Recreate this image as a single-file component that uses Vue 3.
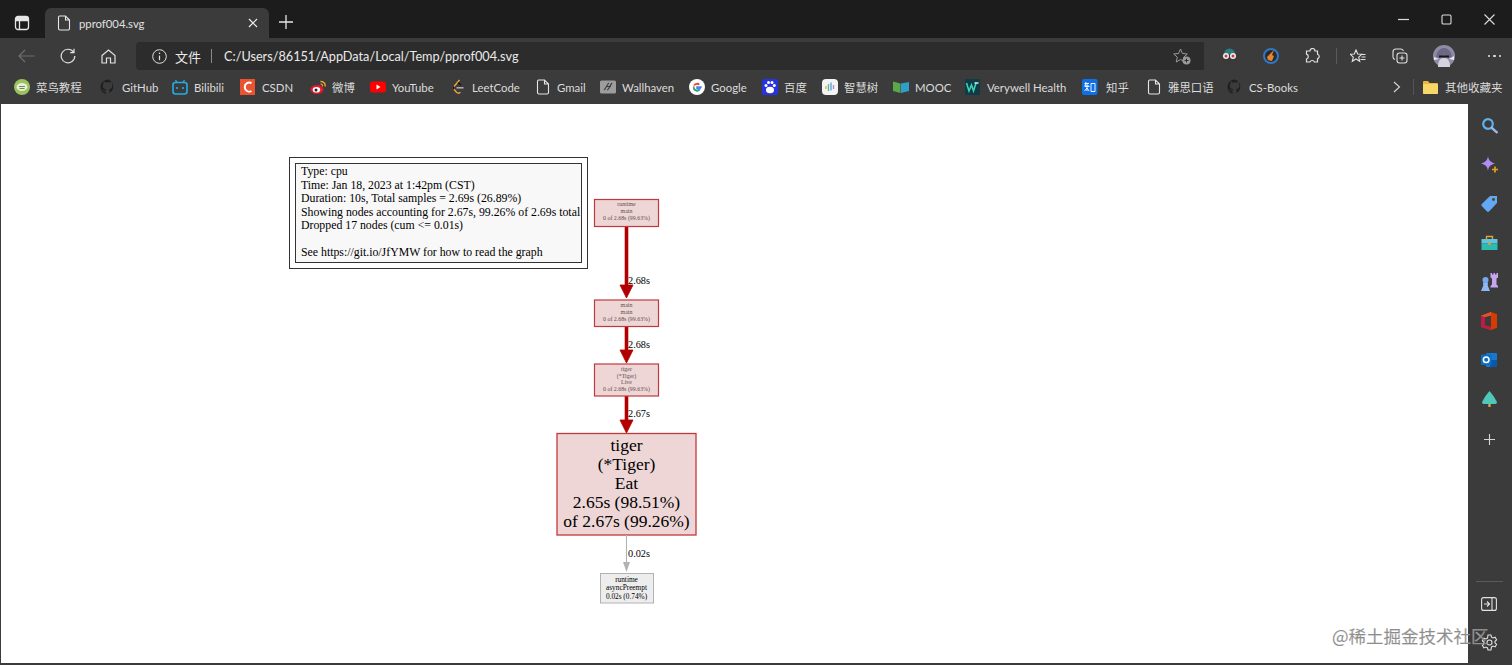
<script setup>
const bookmarks = [
  { id: 'runoob', label: '菜鸟教程', w: 86 },
  { id: 'github', label: 'GitHub', w: 72 },
  { id: 'bili', label: 'Bilibili', w: 68 },
  { id: 'csdn', label: 'CSDN', w: 70 },
  { id: 'weibo', label: '微博', w: 60 },
  { id: 'yt', label: 'YouTube', w: 80 },
  { id: 'leet', label: 'LeetCode', w: 85 },
  { id: 'doc', label: 'Gmail', w: 65 },
  { id: 'wall', label: 'Wallhaven', w: 89 },
  { id: 'google', label: 'Google', w: 73 },
  { id: 'baidu', label: '百度', w: 60 },
  { id: 'zhs', label: '智慧树', w: 71 },
  { id: 'mooc', label: 'MOOC', w: 72 },
  { id: 'very', label: 'Verywell Health', w: 117 },
  { id: 'zhihu', label: '知乎', w: 64 },
  { id: 'doc', label: '雅思口语', w: 81 },
  { id: 'github', label: 'CS-Books', w: 100 }
]
const legend = [
  ['Type: cpu', 175],
  ['Time: Jan 18, 2023 at 1:42pm (CST)', 189],
  ['Duration: 10s, Total samples = 2.69s (26.89%)', 202],
  ['Showing nodes accounting for 2.67s, 99.26% of 2.69s total', 216],
  ['Dropped 17 nodes (cum <= 0.01s)', 229],
  ['See https://git.io/JfYMW for how to read the graph', 256]
]
const smallNodes = [
  { y: 199.5, h: 27, lines: [['runtime', 206], ['main', 213], ['0 of 2.68s (99.63%)', 220]] },
  { y: 300, h: 26.5, lines: [['main', 307], ['main', 314], ['0 of 2.68s (99.63%)', 321]] },
  { y: 364, h: 32, lines: [['tiger', 371], ['(*Tiger)', 377.5], ['Live', 384], ['0 of 2.68s (99.63%)', 390.5]] }
]
const bigLines = [['tiger', 451], ['(*Tiger)', 470], ['Eat', 489], ['2.65s (98.51%)', 508], ['of 2.67s (99.26%)', 527]]
const redEdges = [
  { y1: 226, y2: 287, tip: 298, label: '2.68s', ly: 284 },
  { y1: 326, y2: 351, tip: 363, label: '2.68s', ly: 348 },
  { y1: 396, y2: 421, tip: 433, label: '2.67s', ly: 417 }
]
</script>

<template>
  <div class="window">
    <header class="tabstrip">
      <button class="strip-btn first">
        <svg width="16" height="16" viewBox="0 0 16 16" fill="none" stroke="#e6e6e6" stroke-width="1.3"><rect x="1.5" y="1.5" width="13" height="13" rx="2.5"/><path d="M1.5 5.5h13M5.5 5.5v9" /><path d="M2 2h12v3.5H2z" fill="#e6e6e6" stroke="none"/></svg>
      </button>
      <div class="tab">
        <svg width="14" height="16" viewBox="0 0 14 16" fill="none" stroke="#e6e6e6" stroke-width="1.1"><path d="M2.5 1h6l4 4v8.5a1.5 1.5 0 0 1-1.5 1.5H3a1.5 1.5 0 0 1-1.5-1.5V2.5A1.5 1.5 0 0 1 2.5 1zM8.5 1v4h4"/></svg>
        <span class="tab-title">pprof004.svg</span>
        <svg class="tab-close" width="10" height="10" viewBox="0 0 10 10" stroke="#eee" stroke-width="1.2"><path d="M1 1l8 8M9 1l-8 8"/></svg>
      </div>
      <svg class="new-tab" width="14" height="14" viewBox="0 0 14 14" stroke="#e6e6e6" stroke-width="1.3"><path d="M7 0v14M0 7h14"/></svg>
      <div class="win-controls">
        <span class="win-btn"><svg width="11" height="11" viewBox="0 0 11 11" stroke="#ddd" stroke-width="1.2"><path d="M0 5.5h11"/></svg></span>
        <span class="win-btn"><svg width="11" height="11" viewBox="0 0 11 11" fill="none" stroke="#ddd" stroke-width="1.1"><rect x="1" y="1" width="9" height="9" rx="1.3"/></svg></span>
        <span class="win-btn"><svg width="11" height="11" viewBox="0 0 11 11" stroke="#ddd" stroke-width="1.1"><path d="M.5.5l10 10M10.5.5l-10 10"/></svg></span>
      </div>
    </header>

    <div class="toolbar">
      <span class="nav-btn">
        <svg width="17" height="14" viewBox="0 0 17 14" fill="none" stroke="#6f6f6f" stroke-width="1.2"><path d="M16.5 7H1M7 1L1 7l6 6"/></svg>
      </span>
      <span class="nav-btn">
        <svg width="16" height="16" viewBox="0 0 16 16" fill="none" stroke="#e2e2e2" stroke-width="1.2"><path d="M13.6 4.2A6.8 6.8 0 1 0 14.8 8"/><path d="M14 .8v3.8h-3.8"/></svg>
      </span>
      <span class="nav-btn">
        <svg width="15" height="15" viewBox="0 0 15 15" fill="none" stroke="#e2e2e2" stroke-width="1.2"><path d="M1 6.5L7.5 1 14 6.5V14H9.5V9h-4v5H1z"/></svg>
      </span>
      <div class="address">
        <svg width="15" height="15" viewBox="0 0 15 15" fill="none" stroke="#e2e2e2" stroke-width="1"><circle cx="7.5" cy="7.5" r="6.8"/><path d="M7.5 6.6v4.600" stroke-width="1.2"/><path d="M7.5 3.6v1.400" stroke-width="1.3"/></svg>
        <span class="addr-scheme">文件</span>
        <span class="addr-sep"></span>
        <span class="addr-url">C:/Users/86151/AppData/Local/Temp/pprof004.svg</span>
        <svg class="addr-star" width="18" height="17" viewBox="0 0 18 17" fill="none" stroke="#9a9a9a" stroke-width="1"><path d="M7.5 1l2 4.500 4.800.5-3.600 3.200 1 4.800-4.200-2.500L3.300 14l1-4.800L.7 6l4.800-.5z"/><circle cx="13.500" cy="12.500" r="4" fill="#9a9a9a" stroke="none"/><path d="M13.500 10.500v4M11.500 12.500h4" stroke="#2c2c2c"/></svg>
      </div>
      <span class="tool-btn">
        <svg width="17" height="16" viewBox="0 0 17 16"><path d="M3 6a5.500 5.500 0 0 1 11 0z" fill="#2a7d7c"/><path d="M2 9h13v4a3 3 0 0 1-3 3H5a3 3 0 0 1-3-3z" fill="#3a3a3a"/><circle cx="5" cy="8" r="3" fill="#eee"/><circle cx="12" cy="8" r="3" fill="#eee"/><circle cx="5" cy="8" r="1.500" fill="#c73a3a"/><circle cx="12" cy="8" r="1.500" fill="#c73a3a"/></svg>
      </span>
      <span class="tool-btn">
        <svg width="16" height="16" viewBox="0 0 16 16"><circle cx="8" cy="8" r="7" fill="#2b2b2b" stroke="#2f77c8" stroke-width="2"/><path d="M11 2L9 7l2 1-2 5-4-1-1-3 3-3z" fill="#e8842c"/></svg>
      </span>
      <span class="tool-btn">
        <svg width="15" height="16" viewBox="0 0 15 16" fill="none" stroke="#e2e2e2" stroke-width="1.2"><path d="M5 3a2.500 2.500 0 0 1 5 0h2.500v3.200a2.400 2.400 0 0 1 0 4.600V14H9.500a2.500 2.500 0 0 0-4.600 0H1.500v-3a2.500 2.500 0 0 0 0-4.800V3z"/></svg>
      </span>
      <span class="tool-sep"></span>
      <span class="tool-btn second">
        <svg width="16" height="15" viewBox="0 0 16 15" fill="none" stroke="#e2e2e2" stroke-width="1.100"><path d="M6 1l1.700 4 4 .3-3 2.800 1 4.200L6 10l-3.700 2.300 1-4.200-3-2.800 4-.3zM11 5.500h4.500M11.500 8h4M10.500 10.500h5"/></svg>
      </span>
      <span class="tool-btn">
        <svg width="16" height="16" viewBox="0 0 16 16" fill="none" stroke="#e2e2e2" stroke-width="1.100"><path d="M3 11.500A2.500 2.500 0 0 1 1 9V4a3 3 0 0 1 3-3h5a2.500 2.500 0 0 1 2.400 2"/><rect x="5" y="5" width="10" height="10" rx="2.500"/><path d="M10 7.500v5M7.500 10h5"/></svg>
      </span>
      <span class="avatar">
        <svg width="22" height="22" viewBox="0 0 22 22"><circle cx="11" cy="11" r="11" fill="#8f8aa6"/><path d="M5 22c0-6 2-9 6-9s6 3 6 9z" fill="#d6d3e0"/><path d="M3 12c1-7 5-9 8-9s7 2 8 9l-3 1-5-3-5 3z" fill="#6d6884"/><path d="M6 10.500h10v2H6z" fill="#15151c"/><path d="M16 14l5-3v4zM6 14l-5-2v3z" fill="#ece9f2"/></svg>
      </span>
      <span class="more"><i></i><i></i><i></i></span>
    </div>

    <nav class="bookmarks">
      <a v-for="b in bookmarks" :key="b.label" class="bm" :class="{ 'bm-wide': b.id === 'zhihu' }" :style="{ width: b.w + 'px' }">
        <svg width="16" height="16" viewBox="0 0 16 16" fill="none">
          <template v-if="b.id === 'runoob'"><circle cx="8" cy="8" r="8" fill="#9ac25f"/><ellipse cx="8" cy="8" rx="5.500" ry="4" fill="#e8efd8"/><path d="M5 7.500h6M5.500 9.500h5" stroke="#6a8f45"/></template>
          <template v-else-if="b.id === 'github'"><path d="M8 .5a7.500 7.500 0 0 0-2.400 14.600v-2.600c-2 .4-2.500-.9-2.500-.9-.4-.9-.9-1.200-.9-1.200-.7-.5 0-.5 0-.5.800.1 1.200.8 1.200.8.700 1.200 1.800.9 2.300.7 0-.5.300-.9.500-1.100-1.700-.2-3.400-.8-3.400-3.700 0-.8.300-1.500.8-2-.1-.2-.3-1 .1-2 0 0 .6-.2 2 .8a7 7 0 0 1 3.800 0c1.400-1 2-.8 2-.8.400 1 .2 1.800.1 2 .5.500.8 1.200.8 2 0 2.900-1.700 3.500-3.400 3.700.3.200.5.700.5 1.300v2.500A7.500 7.500 0 0 0 8 .5z" fill="#1f1f1f"/></template>
          <template v-else-if="b.id === 'bili'"><rect x="1" y="3.500" width="14" height="11.500" rx="2.500" stroke="#23ade5" stroke-width="1.600"/><path d="M5 3.500L3.500 1M11 3.500L12.500 1" stroke="#23ade5" stroke-width="1.400"/><path d="M5 8v2M11 8v2" stroke="#23ade5" stroke-width="1.600"/></template>
          <template v-else-if="b.id === 'csdn'"><rect width="15" height="16" fill="#e9532f"/><path d="M11.500 4.200A4.500 4.500 0 1 0 11.500 12" stroke="#fff" stroke-width="2"/></template>
          <template v-else-if="b.id === 'weibo'"><ellipse cx="7" cy="10.500" rx="6.500" ry="4.500" fill="#e6162d"/><ellipse cx="6.500" cy="10.800" rx="3.800" ry="2.800" fill="#fff"/><circle cx="6" cy="11" r="1.500" fill="#222"/><path d="M10.500 2.500a4 4 0 0 1 4.500 5" stroke="#f5a623" stroke-width="1.400"/><path d="M10.500 5a1.800 1.800 0 0 1 2 2.400" stroke="#f5a623" stroke-width="1.100"/></template>
          <template v-else-if="b.id === 'yt'"><rect y="2.500" width="16" height="11" rx="3" fill="#f00"/><path d="M6.500 5.500v5l4-2.500z" fill="#fff"/></template>
          <template v-else-if="b.id === 'leet'"><path d="M9.500 1L4 7.500a2 2 0 0 0 0 2.800l2.500 3a3 3 0 0 0 4 0" stroke="#e8a33d" stroke-width="1.500"/><path d="M8 3.500l3 2.500" stroke="#151515" stroke-width="1.600"/><path d="M6.500 8.800h7" stroke="#b5b5b5" stroke-width="1.500"/><path d="M4 7.500a2 2 0 0 0 0 2.800" stroke="#151515" stroke-width="1.500"/></template>
          <template v-else-if="b.id === 'doc'"><path d="M3.500 1h6l4 4v8.500a1.500 1.500 0 0 1-1.500 1.500H4a1.500 1.500 0 0 1-1.500-1.500V2.500A1.500 1.500 0 0 1 3.500 1zM9.500 1v4h4" stroke="#e6e6e6" stroke-width="1.100"/></template>
          <template v-else-if="b.id === 'wall'"><rect y="1.500" width="16" height="13" rx="1.500" fill="#9d9d9d"/><path d="M4 11c2-1 3-6 5-7M7 11c2 0 3-5 5-7M6 7.500h5" stroke="#3c3c3c" stroke-width="1.100"/></template>
          <template v-else-if="b.id === 'google'"><circle cx="8" cy="8" r="8" fill="#fff"/><path d="M12.800 8H8v1.500h3A3.200 3.200 0 0 1 4.800 8" stroke="#4285f4" stroke-width="1.500"/><path d="M4.800 8a3.300 3.300 0 0 1 .5-1.700" stroke="#fbbc05" stroke-width="1.800"/><path d="M5.300 6.300a3.300 3.300 0 0 1 5-.7" stroke="#ea4335" stroke-width="1.800"/><path d="M5 9.500a3.300 3.300 0 0 0 5 1.500" stroke="#34a853" stroke-width="1.800"/></template>
          <template v-else-if="b.id === 'baidu'"><rect width="16" height="16" rx="2" fill="#2932e1"/><ellipse cx="8" cy="11" rx="4" ry="3.200" fill="#fff"/><circle cx="4" cy="6.500" r="1.500" fill="#fff"/><circle cx="6.500" cy="3.500" r="1.500" fill="#fff"/><circle cx="10" cy="3.500" r="1.500" fill="#fff"/><circle cx="12.300" cy="6.500" r="1.500" fill="#fff"/></template>
          <template v-else-if="b.id === 'zhs'"><rect width="16" height="16" rx="4" fill="#f4f4f4"/><path d="M4 7v3" stroke="#e8b13c" stroke-width="1.400"/><path d="M6.500 5v7" stroke="#5bb98c" stroke-width="1.400"/><path d="M9 3.500v8" stroke="#5da7e0" stroke-width="1.400"/><path d="M11.500 6v4" stroke="#a78be0" stroke-width="1.400"/></template>
          <template v-else-if="b.id === 'mooc'"><path d="M0 2.500l7.500 2v9.500L0 12z" fill="#5aa84a"/><path d="M8 4.500l8-1.500v9l-8 2z" fill="#2f9fc9"/></template>
          <template v-else-if="b.id === 'very'"><rect width="15" height="16" fill="#0f3b46"/><path d="M1.500 4l2.500 8 2.500-6 2 6 2.500-8" stroke="#3fd0b5" stroke-width="1.600"/><path d="M9.500 4h4" stroke="#fff" stroke-width="1.300"/></template>
          <template v-else-if="b.id === 'zhihu'"><rect width="15.500" height="16" rx="2" fill="#0e6fe6"/><path d="M2.500 4.500h4.500M4 3l-1 4h4M2.500 7.500h5M5 4.500V12M2.500 12L5 9l2 3M9 4.500h4v8H9zM9 12.500h4" stroke="#fff" stroke-width=".9"/></template>
        </svg>
        <span class="bm-label">{{ b.label }}</span>
      </a>
      <svg class="bm-chevron" width="8" height="12" viewBox="0 0 8 12" fill="none" stroke="#d8d8d8" stroke-width="1.100"><path d="M1 1l5.500 5L1 11"/></svg>
      <span class="bm-sep"></span>
      <svg class="bm-folder" width="15" height="14" viewBox="0 0 15 14"><path d="M0 2a1 1 0 0 1 1-1h4l1.500 2H14a1 1 0 0 1 1 1v9a1 1 0 0 1-1 1H1a1 1 0 0 1-1-1z" fill="#e8b93f"/><rect y="4" width="15" height="10" rx="1" fill="#f6d768"/></svg>
      <span class="bm-label folder-label">其他收藏夹</span>
    </nav>

    <div class="main">
      <main class="content">
        <svg class="graph" width="1467" height="559" viewBox="1 104 1467 559">
          <rect x="289.500" y="157.500" width="298" height="111" fill="#fff" stroke="#333"/>
          <rect x="295.500" y="163.500" width="286" height="99" fill="#f8f8f8" stroke="#333"/>
          <text v-for="l in legend" :key="l[0]" x="301" :y="l[1]" class="t legend">{{ l[0] }}</text>

          <g v-for="e in redEdges" :key="e.y1">
            <path :d="`M626.500 ${e.y1}V${e.y2}`" stroke="#b20000" stroke-width="3.600"/>
            <path :d="`M620 ${e.tip - 13}L633 ${e.tip - 13}L626.500 ${e.tip}Z`" fill="#b20000" stroke="#b20000" stroke-width=".8"/>
            <text x="628" :y="e.ly" class="t edge">{{ e.label }}</text>
          </g>
          <g v-for="n in smallNodes" :key="n.y">
            <rect x="594.500" :y="n.y" width="64" :height="n.h" fill="#edd6d5" stroke="#c0393b" stroke-width="1.200"/>
            <text v-for="l in n.lines" :key="l[1]" x="626.500" :y="l[1]" class="t tiny">{{ l[0] }}</text>
          </g>

          <rect x="557" y="433.500" width="139" height="101.500" fill="#edd6d5" stroke="#c0393b" stroke-width="1.300"/>
          <text v-for="l in bigLines" :key="l[1]" x="626.500" :y="l[1]" class="t big">{{ l[0] }}</text>

          <path d="M626.500 535V563" stroke="#b2b2b2" stroke-width="1.100"/>
          <path d="M623 562h7l-3.500 10z" fill="#b2b2b2"/>
          <text x="628" y="556.500" class="t edge">0.02s</text>
          <rect x="600.500" y="573.500" width="53" height="29.500" fill="#ededed" stroke="#b2b2b2"/>
          <text x="626.500" y="581.500" class="t leaf">runtime</text>
          <text x="626.500" y="589.500" class="t leaf">asyncPreempt</text>
          <text x="626.500" y="598.500" class="t leaf">0.02s (0.74%)</text>
        </svg>
      </main>
      <aside class="sidebar">
        <span class="side-btn"><svg width="17" height="17" viewBox="0 0 17 17" fill="none"><circle cx="7" cy="7" r="4.800" stroke="#5fb0ee" stroke-width="2.200"/><path d="M10.800 10.800l5 4.500" stroke="#9fb6e8" stroke-width="2.400" stroke-linecap="round"/></svg></span>
        <span class="side-btn"><svg width="17" height="17" viewBox="0 0 17 17"><path d="M7 0c.6 4 2 6 7 7.500-5 1.500-6.400 3-7 7.500-.6-4.500-2-6-7-7.500C5 6 6.400 4 7 0z" fill="#b18cf2"/><path d="M14 10.500v6M11 13.500h6" stroke="#e8a01f" stroke-width="1.700"/></svg></span>
        <span class="side-btn"><svg width="17" height="17" viewBox="0 0 17 17"><path d="M9 1h7v7l-8 8.500a1.500 1.500 0 0 1-2 0L.8 11a1.500 1.500 0 0 1 0-2z" fill="#63a8f5"/><circle cx="12.500" cy="4.500" r="1.400" fill="#5c3d11"/></svg></span>
        <span class="side-btn"><svg width="17" height="16" viewBox="0 0 17 16" fill="none"><path d="M5.500 4V1.500h6V4" stroke="#d9a53a" stroke-width="1.400"/><rect x=".5" y="4" width="16" height="4.500" fill="#5ec4e0"/><rect x=".5" y="8.500" width="16" height="6.500" fill="#2dbbb0"/><circle cx="8.500" cy="8.500" r="1.400" fill="#d9a53a"/></svg></span>
        <span class="side-btn"><svg width="18" height="18" viewBox="0 0 18 18"><path d="M10.500 0h1.500v1.500h1.500V0H15v1.500h1.500V0H18v4.500l-1.500 1v6l1.500 1.500v1.500h-7.500V13l1.500-1.500v-6l-1.500-1z" fill="#c7a5ef"/><circle cx="5.500" cy="7" r="3" fill="#77a9f0"/><path d="M3 9.500h5l-.3 3 2.300 5.500H1l2.300-5.500z" fill="#8fb6f5"/></svg></span>
        <span class="side-btn"><svg width="16" height="18" viewBox="0 0 16 18"><path fill-rule="evenodd" d="M10 0l6 2.200v13.500L10 18 0 15V3.800zM10 3.500L4 5v8.500l6 1.500z" fill="#d83b01"/><path d="M10 18L0 15V3.800L4 5v8.500l6 1.500z" fill="#b91d47"/><path d="M10 0L0 3.800 4 5l6-1.500z" fill="#e0532a"/></svg></span>
        <span class="side-btn"><svg width="16" height="16" viewBox="0 0 16 16"><rect x="5" y="1" width="11" height="14" rx="1" fill="#1678d0"/><rect x="9" y="8" width="7" height="7" fill="#0c58a8"/><rect y="2.500" width="10.500" height="10.500" rx="1" fill="#0d6ec4"/><circle cx="5.200" cy="7.700" r="2.800" fill="none" stroke="#fff" stroke-width="1.500"/></svg></span>
        <span class="side-btn"><svg width="15" height="16" viewBox="0 0 15 16"><path d="M7.500 0l4 5 3.500 6a2 2 0 0 1-1.800 2H1.800A2 2 0 0 1 0 11l3.500-6z" fill="#4fc7b9"/><rect x="6.300" y="13" width="2.400" height="3" fill="#d6a14e"/></svg></span>
        <span class="side-btn plus"><svg width="11" height="11" viewBox="0 0 11 11" stroke="#d6d6d6" stroke-width="1.100"><path d="M5.500 0v11M0 5.500h11"/></svg></span>
        <span class="side-fill"></span>
        <span class="side-line"></span>
        <span class="side-btn low"><svg width="16" height="14" viewBox="0 0 16 14" fill="none" stroke="#e2e2e2" stroke-width="1.100"><rect x=".6" y=".6" width="14.800" height="12.800" rx="2"/><path d="M11 .6v12.800M3 7h5M6 4.500L8.500 7 6 9.500"/></svg></span>
        <span class="side-btn gear"><svg width="17" height="17" viewBox="0 0 17 17" fill="none" stroke="#e2e2e2" stroke-width="1.100"><circle cx="8.500" cy="8.500" r="2.500"/><path d="M7 1h3l.5 2.200 1.500.8 2.100-.8 1.500 2.600-1.600 1.500v1.500l1.600 1.500-1.500 2.600-2.100-.8-1.500.8L10 16H7l-.5-2.100-1.500-.8-2.100.8-1.500-2.600L3 9.800V8.300L1.400 6.800l1.500-2.600 2.100.8 1.500-.8z"/></svg></span>
      </aside>
      <span class="watermark">@稀土掘金技术社区</span>
    </div>
  </div>
</template>

<style>
html, body { margin: 0; background: #333; overflow: hidden; }
</style>

<style scoped>
.window {
  width: 1512px;
  height: 665px;
  display: flex;
  flex-direction: column;
  background: #3b3b3b;
  font-family: Lato, "Noto Sans CJK SC", sans-serif;
  overflow: hidden;
}
.tabstrip {
  height: 38px;
  flex: none;
  display: flex;
  align-items: flex-end;
  background: #1c1c1c;
}
.strip-btn {
  width: 45px;
  height: 30px;
  padding: 0;
  border: 0;
  background: none;
  display: flex;
  align-items: center;
  justify-content: center;
}
.strip-btn.first { padding-right: 1px; }
.tab {
  width: 224px;
  height: 30px;
  box-sizing: border-box;
  background: #3b3b3b;
  border-radius: 6px 6px 0 0;
  padding: 0 11px 0 12px;
  display: flex;
  align-items: center;
}
.tab-title { margin-left: 8px; font-size: 11.300px; color: #e0e0e0; flex: 1; }
.tab-close { flex: none; }
.new-tab { margin: 0 0 9px 10px; flex: none; }
.win-controls { margin-left: auto; display: flex; align-self: stretch; padding-right: 1px; }
.win-btn { width: 43px; display: flex; align-items: center; justify-content: center; }
.toolbar {
  height: 32px;
  flex: none;
  display: flex;
  align-items: center;
  padding: 4px 0 0 6px;
  box-sizing: border-box;
  background: #3b3b3b;
}
.nav-btn { width: 41px; display: flex; justify-content: center; flex: none; }
.address {
  width: 1068px;
  height: 28px;
  margin-left: 7px;
  flex: none;
  background: #2c2c2c;
  border-radius: 4px 0 0 4px;
  display: flex;
  align-items: center;
  padding: 0 13px 0 16px;
  box-sizing: border-box;
  color: #eaeaea;
}
.addr-scheme { margin-left: 8px; font-size: 13px; }
.addr-sep { width: 1px; height: 14px; background: #8a8a8a; margin: 0 12px 0 10px; }
.addr-url { font-size: 12.700px; flex: 1; }
.tool-btn { width: 41.500px; display: flex; justify-content: center; flex: none; }
.address + .tool-btn { margin-left: 5px; }
.tool-sep { width: 1px; height: 16px; background: #5a5a5a; margin: 0 0 0 2px; flex: none; }
.tool-btn.second { margin-left: 1px; }
.avatar { width: 44px; display: flex; justify-content: center; flex: none; margin-left: 1px; }
.more { display: flex; gap: 3px; margin-left: 22px; }
.more i { width: 2.500px; height: 2.500px; border-radius: 50%; background: #e6e6e6; }
.bookmarks {
  height: 34px;
  flex: none;
  display: flex;
  align-items: center;
  padding: 0 0 0 14px;
  box-sizing: border-box;
  background: #3b3b3b;
}
.bm { display: flex; align-items: center; flex: none; gap: 6px; white-space: nowrap; }
.bm-wide { gap: 8px; }
.bm svg { flex: none; }
.bm-label { font-size: 11.400px; color: #dcdcdc; white-space: nowrap; }
.bm-chevron { margin-left: 66px; flex: none; }
.bm-sep { width: 1px; height: 16px; background: #555; margin-left: 12px; flex: none; }
.bm-folder { margin-left: 9px; flex: none; }
.folder-label { margin-left: 7px; font-size: 11.500px; }
.main {
  position: relative;
  flex: 1;
  min-height: 0;
  display: flex;
  border-bottom: 2px solid #3b3b3b;
}
.content {
  flex: 1;
  min-width: 0;
  background: #fff;
  border-left: 1px solid #3b3b3b;
}
.graph { display: block; }
.t { font-family: "Liberation Serif", serif; fill: #000; }
.legend { font-size: 11.800px; }
.edge { font-size: 10.300px; }
.tiny { font-size: 5.900px; text-anchor: middle; fill: #5f4e4e; }
.big { font-size: 17.500px; text-anchor: middle; }
.leaf { font-size: 7.300px; text-anchor: middle; }
.sidebar {
  width: 44px;
  flex: none;
  display: flex;
  flex-direction: column;
  align-items: center;
  padding: 2px 2px 0 0;
  box-sizing: border-box;
  background: #3b3b3b;
}
.side-btn { height: 39px; width: 42px; display: flex; align-items: center; justify-content: center; flex: none; }
.side-btn.plus { height: 43px; }
.side-fill { flex: 1; }
.side-line { width: 27px; height: 1px; background: #5a5a5a; margin-bottom: 3px; flex: none; }
.side-btn.low { height: 38px; }
.side-btn.gear { height: 38px; margin-bottom: 2px; }
.watermark {
  position: absolute;
  left: 1332px;
  top: 520px;
  font-size: 17.500px;
  line-height: 24px;
  color: #8c8c8c;
  white-space: nowrap;
  font-family: "Noto Sans CJK SC", "Noto Sans", sans-serif;
  -webkit-text-stroke: .2px #bbb;
}
</style>
